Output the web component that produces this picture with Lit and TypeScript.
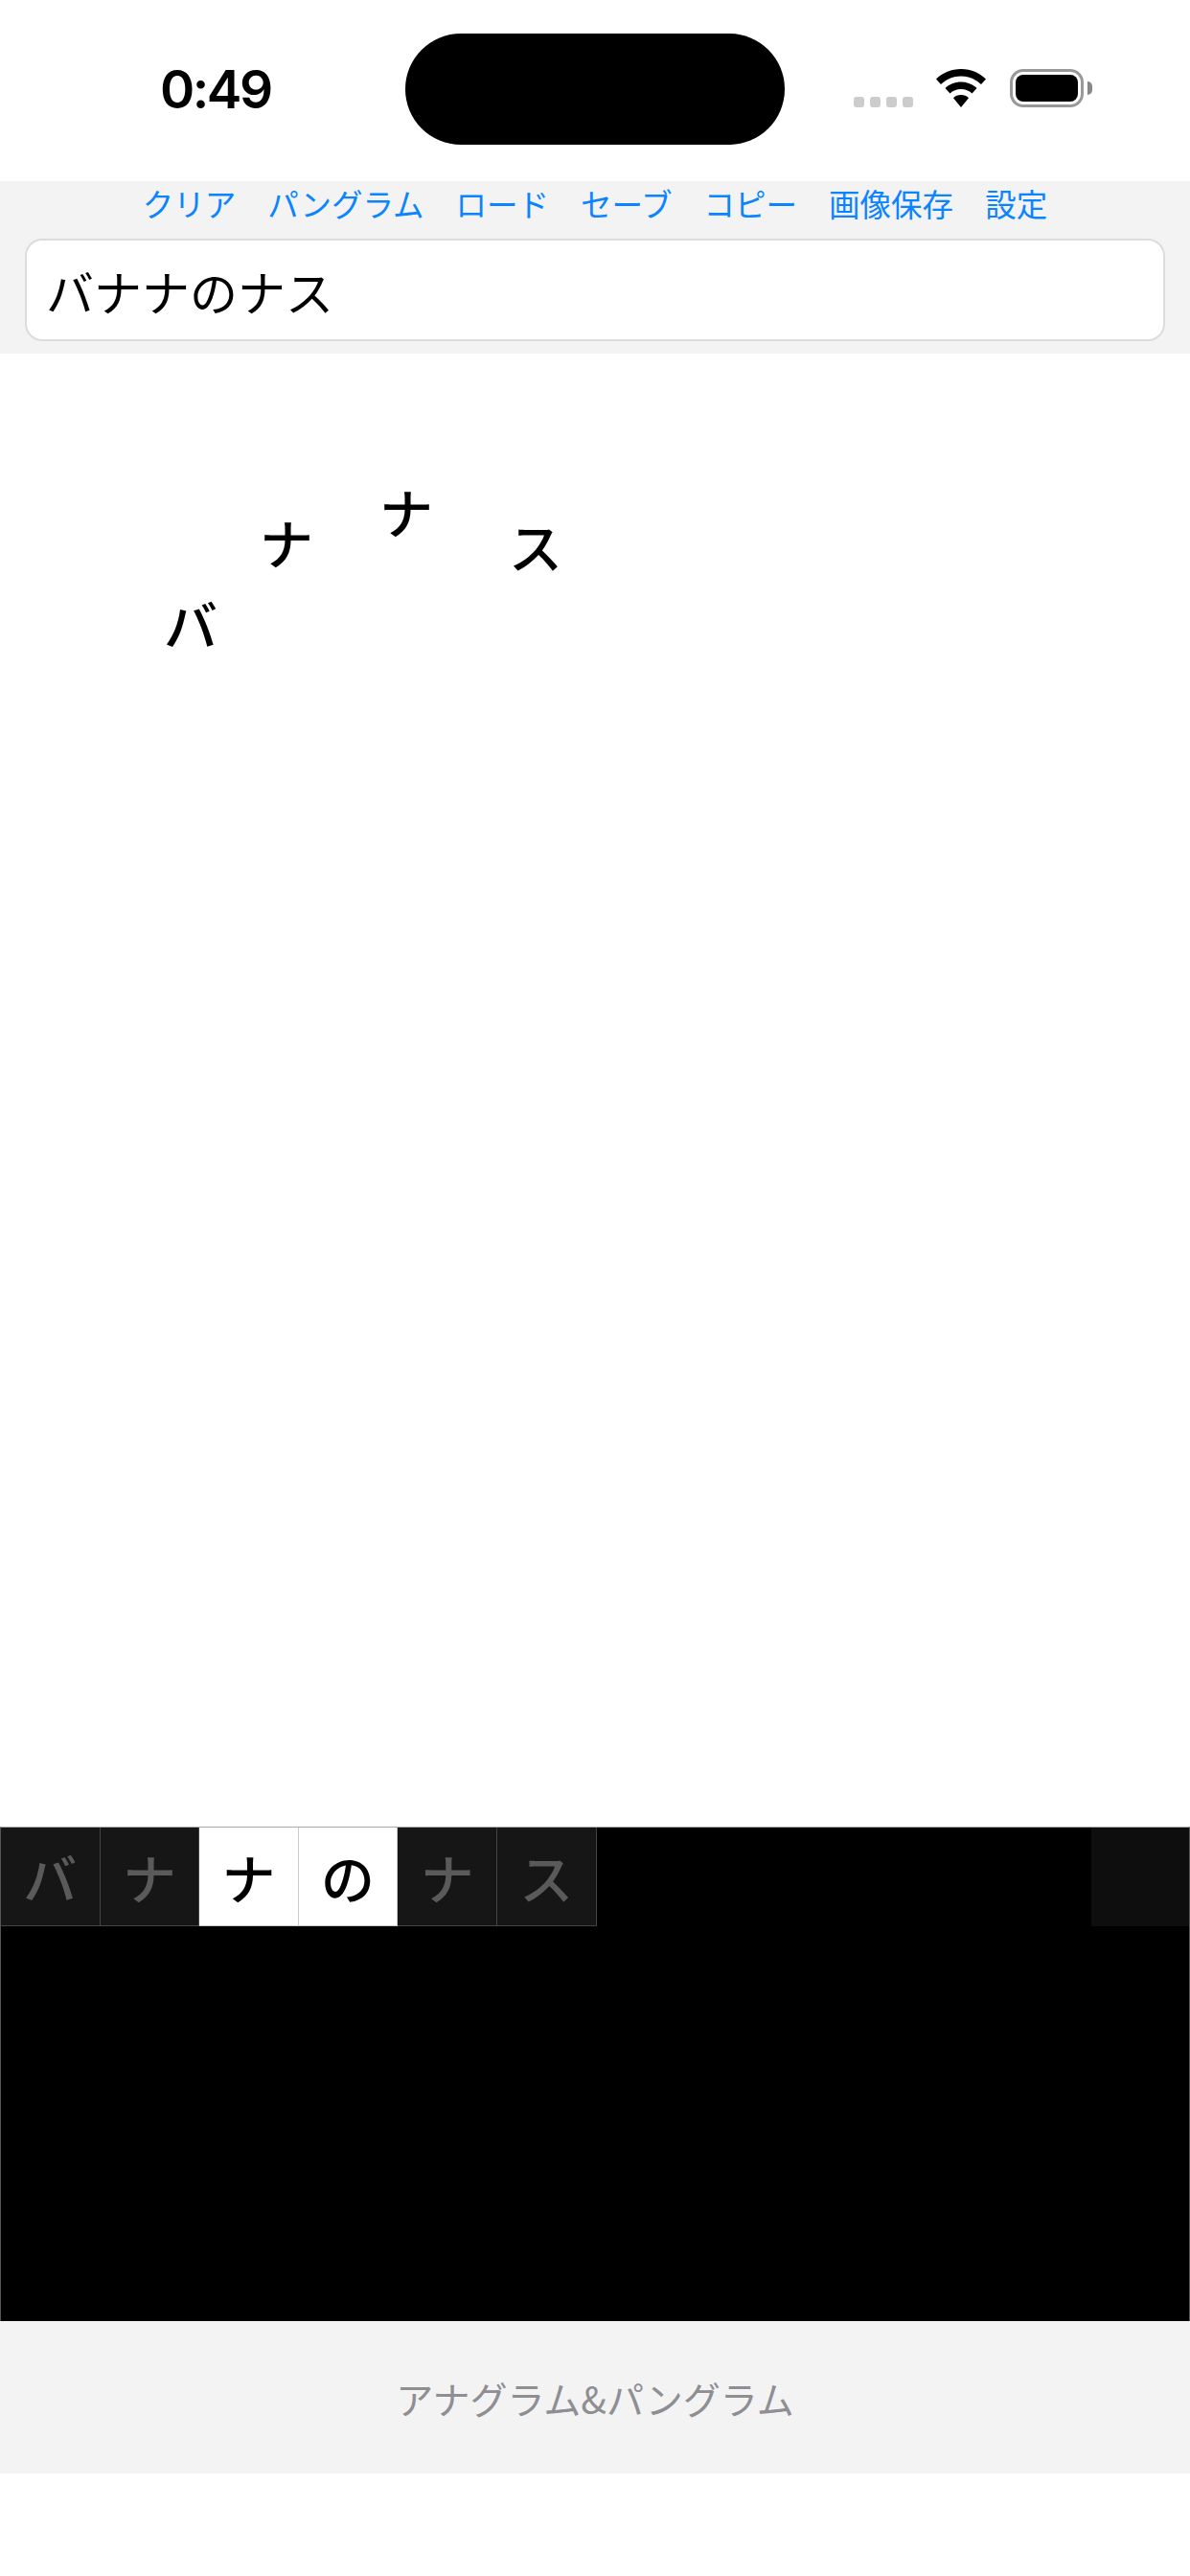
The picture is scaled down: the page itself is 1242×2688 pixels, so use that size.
import { LitElement, html, css } from 'lit';
import { customElement } from 'lit/decorators.js';

const LINKS = ['クリア', 'パングラム', 'ロード', 'セーブ', 'コピー', '画像保存', '設定'];

// letters scattered on the canvas, the place is the content here
const PLACED = [
    { ch: 'バ', x: 171, y: 246 },
    { ch: 'ナ', x: 271, y: 161 },
    { ch: 'ナ', x: 396, y: 129 },
    { ch: 'ス', x: 531, y: 165 },
];

const TILES = [
    { ch: 'バ', on: false },
    { ch: 'ナ', on: false },
    { ch: 'ナ', on: true },
    { ch: 'の', on: true },
    { ch: 'ナ', on: false },
    { ch: 'ス', on: false },
];

@customElement('app-root')
export class AppRoot extends LitElement {
    static styles = css`
        :host {
            display: flex;
            flex-direction: column;
            width: 1242px;
            height: 2688px;
            background: #fff;
            font-family: "Noto Sans CJK JP", "Noto Sans", sans-serif;
            overflow: hidden;
        }

        .status {
            height: 189px;
            flex: none;
            display: flex;
            align-items: flex-start;
        }

        .time {
            width: 423px;
            padding: 62px 0 0 167px;
            box-sizing: border-box;
            font-family: Inter, "Liberation Sans", sans-serif;
            font-weight: 600;
            font-size: 55px;
            line-height: 62px;
            letter-spacing: -2.5px;
            color: #000;
        }

        .island {
            width: 396px;
            height: 116px;
            margin-top: 35px;
            border-radius: 58px;
            background: #000;
        }

        .indicators {
            display: flex;
            align-items: flex-start;
            margin-left: 72px;
            margin-top: 72px;
        }

        .dots {
            display: flex;
            gap: 6px;
            margin-top: 29px;
            margin-right: 24px;
        }

        .dots span {
            width: 11px;
            height: 11px;
            border-radius: 3px;
            background: #ccc;
        }

        .wifi {
            display: block;
            margin-right: 25px;
        }

        .battery {
            display: flex;
            align-items: center;
            gap: 4px;
        }

        .battery-body {
            width: 77px;
            height: 40px;
            box-sizing: border-box;
            border: 3px solid #999;
            border-radius: 14px;
            padding: 3px;
        }

        .battery-body i {
            display: block;
            height: 100%;
            background: #000;
            border-radius: 8px;
        }

        .battery-cap {
            width: 5px;
            height: 14px;
            background: #888;
            border-radius: 0 5px 5px 0;
        }

        .toolbar {
            flex: none;
            height: 180px;
            box-sizing: border-box;
            background: #f3f3f3;
            padding: 0 26px;
        }

        .links {
            display: flex;
            justify-content: center;
            gap: 33px;
            height: 60px;
            align-items: center;
            padding-bottom: 14px;
            box-sizing: border-box;
            font-size: 32.5px;
            line-height: 46px;
            color: #0a84ff;
            white-space: nowrap;
        }

        .field {
            height: 107px;
            box-sizing: border-box;
            border: 2px solid #dcdcdc;
            border-radius: 18px;
            background: #fff;
            padding: 0 20px;
            display: flex;
            align-items: center;
            font-size: 50px;
            color: #000;
        }

        .canvas {
            flex: 1;
            position: relative;
            background: #fff;
        }

        .placed {
            position: absolute;
            font-size: 56px;
            font-weight: 500;
            line-height: 70px;
            color: #000;
        }

        .board {
            flex: none;
            height: 516px;
            box-sizing: border-box;
            background: #000;
            border: 1px solid #555;
            border-width: 1px 1px 0 1px;
            border-top-color: #aaa;
        }

        .tiles {
            display: flex;
            justify-content: space-between;
            align-items: flex-start;
        }

        .tile-row {
            display: flex;
        }

        .tile {
            width: 103.6px;
            height: 103px;
            box-sizing: border-box;
            border: 1px solid #444;
            border-top: 0;
            border-left: 0;
            background: #161616;
            color: #5a5a5a;
            font-size: 56px;
            font-weight: 500;
            display: flex;
            align-items: center;
            justify-content: center;
            line-height: 1;
        }

        .tile.on {
            background: #fff;
            color: #000;
            border-color: #ccc;
        }

        .spare {
            width: 102px;
            height: 103px;
            background: #0e0e0e;
        }

        .footer {
            flex: none;
            height: 159px;
            background: #f3f3f3;
            display: flex;
            align-items: center;
            justify-content: center;
            font-size: 39px;
            color: #8e8e93;
        }

        .bottom {
            flex: none;
            height: 107px;
        }
    `;

    render() {
        return html`
            <div class="status">
                <div class="time">0:49</div>
                <div class="island"></div>
                <div class="indicators">
                    <div class="dots"><span></span><span></span><span></span><span></span></div>
                    <svg class="wifi" width="52" height="40" viewBox="0 0 52 40">
                        <path fill="#000" d="M26 0C16 0 7 3.800 0 10.500L5 16C10.500 10.800 18 7.500 26 7.500S41.500 10.800 47 16L52 10.500C45 3.800 36 0 26 0Z"/>
                        <path fill="#000" d="M26 13.500C19.500 13.500 13.700 16 9.500 20L14.500 25.500C17.500 22.700 21.500 21 26 21S34.500 22.700 37.500 25.500L42.500 20C38.300 16 32.500 13.500 26 13.500Z"/>
                        <path fill="#000" d="M26 27C22.800 27 20 28.200 18 30.200L26 40L34 30.200C32 28.200 29.200 27 26 27Z"/>
                    </svg>
                    <div class="battery">
                        <div class="battery-body"><i></i></div>
                        <div class="battery-cap"></div>
                    </div>
                </div>
            </div>
            <div class="toolbar">
                <div class="links">${LINKS.map(l => html`<span>${l}</span>`)}</div>
                <div class="field">バナナのナス</div>
            </div>
            <div class="canvas">
                ${PLACED.map(p => html`<span class="placed" style="left:${p.x}px;top:${p.y}px">${p.ch}</span>`)}
            </div>
            <div class="board">
                <div class="tiles">
                    <div class="tile-row">
                        ${TILES.map(t => html`<div class="tile ${t.on ? 'on' : ''}">${t.ch}</div>`)}
                    </div>
                    <div class="spare"></div>
                </div>
            </div>
            <div class="footer">アナグラム&amp;パングラム</div>
            <div class="bottom"></div>
        `;
    }
}
